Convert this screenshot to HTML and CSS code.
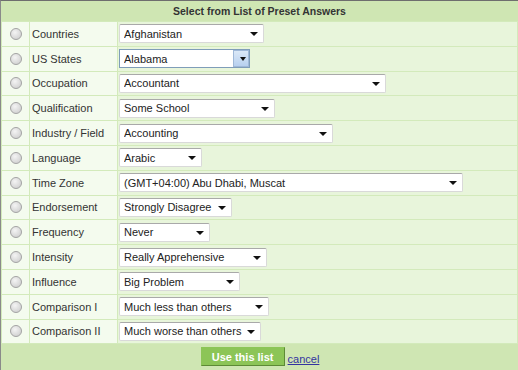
FILE: index.html
```html
<!DOCTYPE html>
<html lang="en">
<head>
    <meta charset="UTF-8">
    <title>Select from List of Preset Answers</title>
    <link rel="stylesheet" href="styles.css">
</head>
<body>
    <div class="panel">
        <div class="panel-title">Select from List of Preset Answers</div>

        <table class="preset-table">
            <tr>
                <td class="col-radio"><input type="radio" name="preset" class="radio"></td>
                <td class="col-label">Countries</td>
                <td><span class="dd w-countries"><select><option>Afghanistan</option></select></span></td>
            </tr>
            <tr>
                <td class="col-radio"><input type="radio" name="preset" class="radio"></td>
                <td class="col-label">US States</td>
                <td><span class="dd dd-focus w-states"><select><option>Alabama</option></select></span></td>
            </tr>
            <tr>
                <td class="col-radio"><input type="radio" name="preset" class="radio"></td>
                <td class="col-label">Occupation</td>
                <td><span class="dd w-occupation"><select><option>Accountant</option></select></span></td>
            </tr>
            <tr>
                <td class="col-radio"><input type="radio" name="preset" class="radio"></td>
                <td class="col-label">Qualification</td>
                <td><span class="dd w-qualification"><select><option>Some School</option></select></span></td>
            </tr>
            <tr>
                <td class="col-radio"><input type="radio" name="preset" class="radio"></td>
                <td class="col-label">Industry / Field</td>
                <td><span class="dd w-industry"><select><option>Accounting</option></select></span></td>
            </tr>
            <tr>
                <td class="col-radio"><input type="radio" name="preset" class="radio"></td>
                <td class="col-label">Language</td>
                <td><span class="dd w-language"><select><option>Arabic</option></select></span></td>
            </tr>
            <tr>
                <td class="col-radio"><input type="radio" name="preset" class="radio"></td>
                <td class="col-label">Time Zone</td>
                <td><span class="dd w-timezone"><select><option>(GMT+04:00) Abu Dhabi, Muscat</option></select></span></td>
            </tr>
            <tr>
                <td class="col-radio"><input type="radio" name="preset" class="radio"></td>
                <td class="col-label">Endorsement</td>
                <td><span class="dd w-endorsement"><select><option>Strongly Disagree</option></select></span></td>
            </tr>
            <tr>
                <td class="col-radio"><input type="radio" name="preset" class="radio"></td>
                <td class="col-label">Frequency</td>
                <td><span class="dd w-frequency"><select><option>Never</option></select></span></td>
            </tr>
            <tr>
                <td class="col-radio"><input type="radio" name="preset" class="radio"></td>
                <td class="col-label">Intensity</td>
                <td><span class="dd w-intensity"><select><option>Really Apprehensive</option></select></span></td>
            </tr>
            <tr>
                <td class="col-radio"><input type="radio" name="preset" class="radio"></td>
                <td class="col-label">Influence</td>
                <td><span class="dd w-influence"><select><option>Big Problem</option></select></span></td>
            </tr>
            <tr>
                <td class="col-radio"><input type="radio" name="preset" class="radio"></td>
                <td class="col-label">Comparison I</td>
                <td><span class="dd w-comparison1"><select><option>Much less than others</option></select></span></td>
            </tr>
            <tr>
                <td class="col-radio"><input type="radio" name="preset" class="radio"></td>
                <td class="col-label">Comparison II</td>
                <td><span class="dd w-comparison2"><select><option>Much worse than others</option></select></span></td>
            </tr>
        </table>

        <div class="panel-footer">
            <button type="button" class="btn-use">Use this list</button>
            <a href="#" class="cancel-link">cancel</a>
        </div>
    </div>
</body>
</html>
```

FILE: styles.css
```css
* {
    margin: 0;
    padding: 0;
    box-sizing: border-box;
}

body {
    font-family: 'Liberation Sans', Arial, sans-serif;
    font-size: 11px;
    color: #333;
    background: #cfe6b3;
}

.panel {
    border-top: 1px solid #6e6e6e;
    border-left: 1px solid #8a8a8a;
    background: #cfe6b3;
    min-height: 370px;
}

.panel-title {
    height: 20px;
    line-height: 20px;
    text-align: center;
    font-weight: bold;
    font-size: 10.5px;
    color: #333;
}

/* list of presets */
.preset-table {
    width: 100%;
    border-collapse: collapse;
    background: #e8f5db;
}

.preset-table td {
    height: 24.8px;
    border: 1px solid #d3eabb;
    vertical-align: middle;
}

.preset-table .col-radio {
    width: 28px;
    text-align: center;
    background: #f4fbee;
}

.preset-table .col-label {
    width: 88px;
    padding-left: 2px;
    background: #f4fbee;
    color: #333;
}

.preset-table td:last-child {
    padding-left: 1px;
}

.radio {
    -webkit-appearance: none;
    appearance: none;
    display: block;
    width: 12px;
    height: 12px;
    margin: 0 auto;
    border: 1px solid #a4a4a4;
    border-radius: 50%;
    background: radial-gradient(circle at 40% 35%, #f4f4f4 0%, #dcdcdc 55%, #c8c8c8 100%);
}

/* dropdowns */
.dd {
    position: relative;
    display: inline-block;
    height: 19px;
    vertical-align: middle;
}

.dd select {
    -webkit-appearance: none;
    appearance: none;
    display: block;
    width: 100%;
    height: 100%;
    padding: 0 14px 0 4px;
    border: 1px solid #d9d9d9;
    border-top-color: #a9a9a9;
    border-radius: 2px;
    background: #fff;
    font-family: inherit;
    font-size: 11px;
    color: #222;
    outline: none;
}

.dd::after {
    content: "";
    position: absolute;
    right: 6px;
    top: 8px;
    border-left: 4px solid transparent;
    border-right: 4px solid transparent;
    border-top: 4px solid #111;
    pointer-events: none;
}

.dd-focus select {
    border: 1px solid #7f9db9;
    border-radius: 0;
}

.dd-focus::before {
    content: "";
    position: absolute;
    right: 1px;
    top: 1px;
    bottom: 1px;
    width: 14px;
    background: linear-gradient(#dbe8f7, #b7d0ef);
    border: 1px solid #9fb8d8;
    pointer-events: none;
}

.dd-focus::after {
    right: 4px;
    border-left-width: 3px;
    border-right-width: 3px;
}

.w-countries { width: 145px; }
.w-states { width: 131px; }
.w-occupation { width: 267px; }
.w-qualification { width: 156px; }
.w-industry { width: 214px; }
.w-language { width: 83px; }
.w-timezone { width: 344px; }
.w-endorsement { width: 113px; }
.w-frequency { width: 91px; }
.w-intensity { width: 148px; }
.w-influence { width: 121px; }
.w-comparison1 { width: 150px; }
.w-comparison2 { width: 142px; }

/* footer */
.panel-footer {
    display: flex;
    justify-content: center;
    align-items: flex-end;
    gap: 3px;
    padding-top: 3px;
    padding-left: 1px;
}

.btn-use {
    width: 84px;
    height: 19px;
    background: #8cc557;
    border: 1px solid #8cc557;
    border-right-color: #5d8a36;
    border-bottom-color: #5d8a36;
    color: #fff;
    font-family: inherit;
    font-size: 11px;
    font-weight: bold;
    cursor: pointer;
}

.cancel-link {
    color: #3333a0;
    font-size: 11px;
    line-height: 14px;
}
```
